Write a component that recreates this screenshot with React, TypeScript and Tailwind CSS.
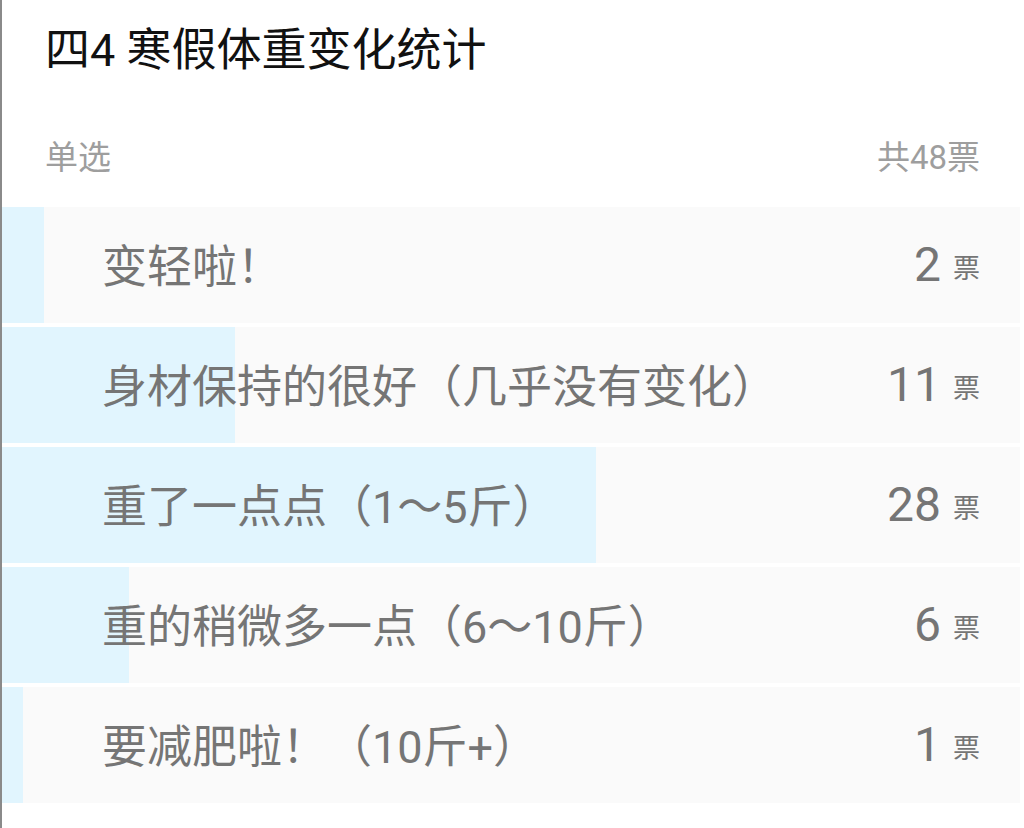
import React from 'react';

const options = [
  { label: '变轻啦！', votes: 2 },
  { label: '身材保持的很好（几乎没有变化）', votes: 11 },
  { label: '重了一点点（1～5斤）', votes: 28 },
  { label: '重的稍微多一点（6～10斤）', votes: 6 },
  { label: '要减肥啦！（10斤+）', votes: 1 },
];

export default function App() {
  const total = options.reduce((s, o) => s + o.votes, 0);

  return (
    <div
      className="min-h-[828px] w-[1024px] border-l-2 border-[#8a8a8a] bg-white pr-[4px]"
      style={{ fontFamily: 'Roboto, "Noto Sans CJK SC", sans-serif' }}
    >
      {/* title */}
      <div className="pl-[43px] pt-[25px] text-[45px] leading-[52px] text-[#111]">四4 寒假体重变化统计</div>

      {/* meta */}
      <div className="mt-[61px] flex justify-between pl-[43px] pr-[40px] text-[33px] leading-[40px] text-[#9e9e9e]">
        <span>单选</span>
        <span>共{total}票</span>
      </div>

      {/* options */}
      <div className="mt-[29px] flex flex-col gap-[4px]">
        {options.map((o) => (
          <div key={o.label} className="relative flex h-[116px] items-center justify-between bg-[#fafafa] pl-[100px] pr-[40px]">
            <div
              className="absolute top-0 bottom-0 left-0 bg-[#e1f5fe]"
              style={{ width: `${(o.votes / total) * 100}%` }}
            />
            <span className="relative mt-[5px] text-[45px] leading-[52px] text-[#757575]">{o.label}</span>
            <span className="relative flex items-baseline gap-[12px] text-[#757575]">
              <span className="text-[48px] leading-[56px]">{o.votes}</span>
              <span className="-translate-y-[3px] text-[27px]">票</span>
            </span>
          </div>
        ))}
      </div>
    </div>
  );
}
